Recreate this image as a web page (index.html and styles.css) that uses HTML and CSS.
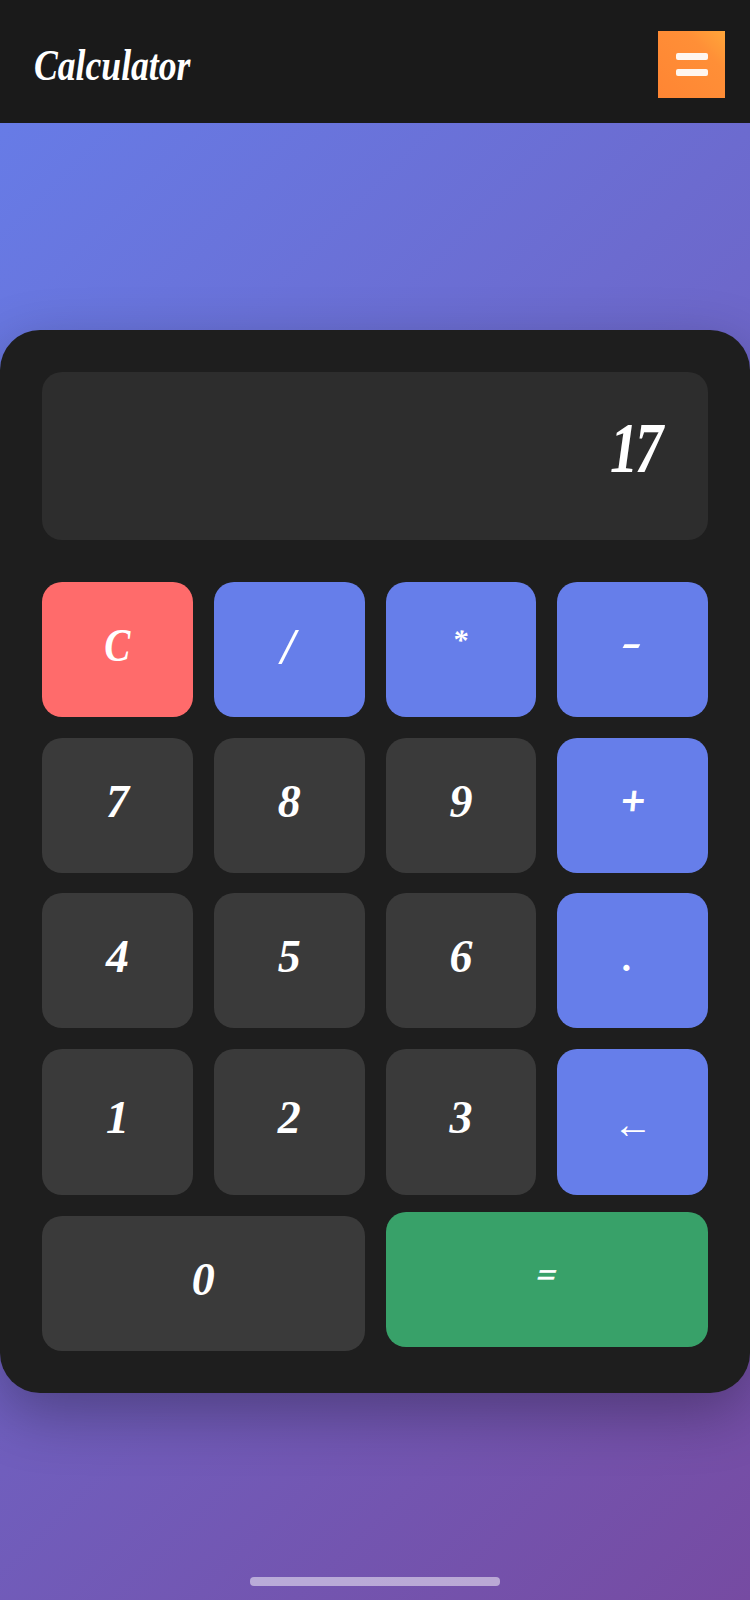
FILE: index.html
```html
<!DOCTYPE html>
<html lang="en">
<head>
    <meta charset="UTF-8">
    <meta name="viewport" content="width=device-width, initial-scale=1.0">
    <title>Calculator</title>
    <link rel="stylesheet" href="styles.css">
</head>
<body>
    <header class="topbar">
        <h1 class="title">Calculator</h1>
        <button class="menu-btn" aria-label="Menu">
            <span class="menu-bar"></span>
            <span class="menu-bar"></span>
        </button>
    </header>
    <main class="stage">
        <div class="calculator">
            <div class="display"><span class="display-value">17</span></div>
            <div class="keypad">
                <button class="key key-clear"><span class="glyph glyph-clear">C</span></button>
                <button class="key key-op"><span class="glyph glyph-slash">/</span></button>
                <button class="key key-op"><span class="glyph glyph-star">*</span></button>
                <button class="key key-op"><span class="glyph glyph-minus">-</span></button>
                <button class="key">7</button>
                <button class="key">8</button>
                <button class="key">9</button>
                <button class="key key-op"><span class="glyph glyph-plus">+</span></button>
                <button class="key">4</button>
                <button class="key">5</button>
                <button class="key">6</button>
                <button class="key key-op"><span class="glyph glyph-dot">.</span></button>
                <button class="key">1</button>
                <button class="key">2</button>
                <button class="key">3</button>
                <button class="key key-op"><span class="glyph glyph-back">←</span></button>
                <button class="key key-wide">0</button>
                <button class="key key-wide key-equals"><span class="glyph glyph-equals">=</span></button>
            </div>
        </div>
        <div class="home-bar"></div>
    </main>
</body>
</html>
```

FILE: styles.css
```css
* {
    box-sizing: border-box;
}
body {
    margin: 0;
    height: 1600px;
    display: flex;
    flex-direction: column;
    font-family: 'Liberation Serif', 'DejaVu Serif', serif;
    background: linear-gradient(135deg, #667eea 0%, #764ba2 100%);
    color: white;
}
.topbar {
    height: 123px;
    display: flex;
    align-items: center;
    justify-content: space-between;
    padding: 6px 25px 0 34px;
    background-color: #1a1a1a;
}
.title {
    margin: 2px 0 0;
    font-size: 44px;
    font-weight: bold;
    font-style: italic;
    transform: scaleX(0.81);
    transform-origin: left center;
}
.menu-btn {
    width: 67px;
    height: 67px;
    display: flex;
    flex-direction: column;
    align-items: center;
    justify-content: center;
    gap: 9px;
    padding: 0;
    border: none;
    background: linear-gradient(45deg, #ff8533, #ff8f37 70%, #ffa63a);
}
.menu-bar {
    width: 32px;
    height: 7px;
    border-radius: 2px;
    background: rgba(255, 255, 255, 0.92);
}
.stage {
    flex: 1;
    display: flex;
    flex-direction: column;
    padding-top: 207px;
}
.calculator {
    padding: 42px;
    height: 1063px;
    border-radius: 40px;
    background-color: #1e1e1e;
    box-shadow: 0 20px 60px rgba(0, 0, 0, 0.3);
}
.display {
    height: 168px;
    display: flex;
    align-items: center;
    justify-content: flex-end;
    padding: 0 48px 16px 0;
    margin-bottom: 42px;
    border-radius: 20px;
    background-color: #2d2d2d;
}
.display-value {
    font-size: 72px;
    font-weight: bold;
    font-style: italic;
    letter-spacing: -4px;
    transform: scaleX(0.78);
    transform-origin: right center;
}
.keypad {
    display: grid;
    grid-template-columns: repeat(4, 1fr);
    grid-template-rows: 135px 135px 135px 146.5px 135px;
    gap: 20.5px 21px;
}
.key {
    display: flex;
    align-items: center;
    justify-content: center;
    padding: 0 0 8px;
    border: none;
    border-radius: 20px;
    font-family: inherit;
    font-size: 46px;
    font-weight: bold;
    font-style: italic;
    color: white;
    background-color: #3a3a3a;
}
.key-clear {
    background-color: #ff6b6b;
}
.key-op {
    background-color: #667eea;
}
.key-wide {
    grid-column: span 2;
}
.key-equals {
    background-color: #38a169;
    transform: translateY(-4px);
}
.glyph {
    display: block;
}
.glyph-clear {
    transform: scaleX(0.85);
}
.glyph-slash {
    font-size: 50px;
    transform: translateX(-1px);
}
.glyph-star {
    font-size: 30px;
    margin-top: -12px;
    transform: translateX(-1px);
}
.glyph-minus {
    font-size: 60px;
    margin-top: -6px;
    transform: skewX(-15deg) scaleY(0.7);
}
.glyph-plus {
    font-size: 42px;
    margin-top: 0;
    -webkit-text-stroke: 1px white;
    transform: skewX(-6deg);
}
.glyph-dot {
    font-size: 38px;
    margin-top: 2px;
    transform: translateX(-5px);
}
.glyph-back {
    font-size: 40px;
    font-weight: normal;
    font-style: normal;
    margin-top: 13px;
}
.glyph-equals {
    font-size: 34px;
    -webkit-text-stroke: 0.5px white;
    transform: skewX(-15deg);
}
.home-bar {
    width: 250px;
    height: 9px;
    margin: auto auto 14px;
    border-radius: 4px;
    background: rgba(255, 255, 255, 0.5);
}
```
